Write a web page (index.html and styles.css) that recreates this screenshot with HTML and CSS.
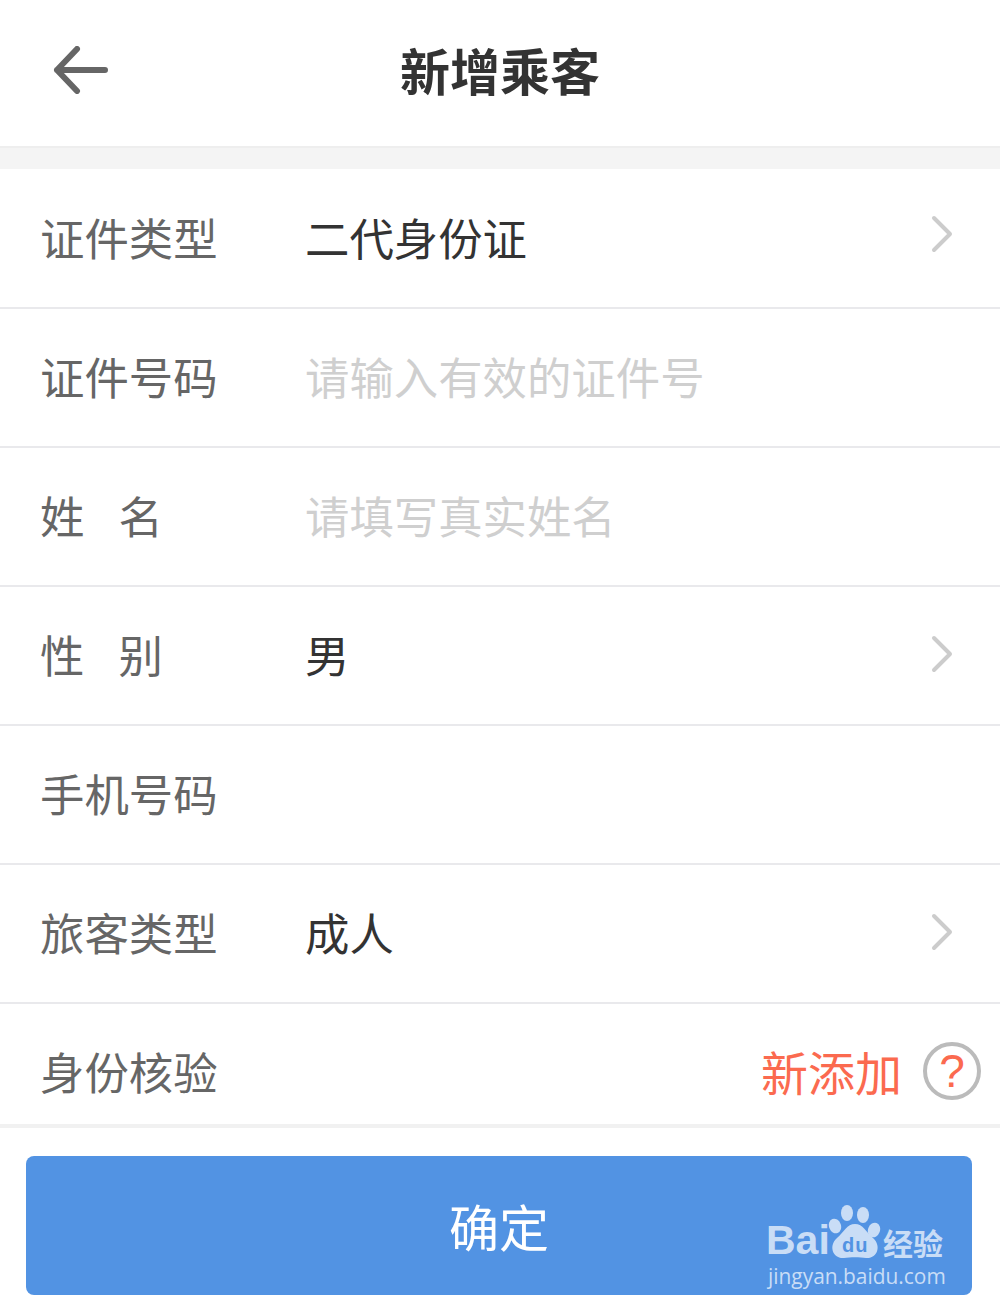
FILE: index.html
```html
<!DOCTYPE html>
<html lang="zh-CN">
<head>
    <meta charset="UTF-8">
    <title>新增乘客</title>
    <link rel="stylesheet" href="styles.css">
</head>
<body>
    <header class="top-bar">
        <svg class="back-icon" width="56" height="48" viewBox="0 0 56 48">
            <path d="M24 3 L4 24 L24 45 M4 24 H52" fill="none" stroke="#666" stroke-width="6" stroke-linecap="round" stroke-linejoin="round"/>
        </svg>
        <h1>新增乘客</h1>
    </header>
    <div class="form">
        <div class="row">
            <span class="label">证件类型</span>
            <span class="value">二代身份证</span>
            <svg class="chevron chevron-up" width="22" height="38" viewBox="0 0 22 38"><path d="M3 3 L19 19 L3 35" fill="none" stroke="#ccc" stroke-width="4" stroke-linecap="round" stroke-linejoin="round"/></svg>
        </div>
        <div class="row">
            <span class="label">证件号码</span>
            <span class="value hint">请输入有效的证件号</span>
        </div>
        <div class="row">
            <span class="label spaced"><span>姓</span><span>名</span></span>
            <span class="value hint">请填写真实姓名</span>
        </div>
        <div class="row">
            <span class="label spaced"><span>性</span><span>别</span></span>
            <span class="value">男</span>
            <svg class="chevron" width="22" height="38" viewBox="0 0 22 38"><path d="M3 3 L19 19 L3 35" fill="none" stroke="#ccc" stroke-width="4" stroke-linecap="round" stroke-linejoin="round"/></svg>
        </div>
        <div class="row">
            <span class="label">手机号码</span>
        </div>
        <div class="row">
            <span class="label">旅客类型</span>
            <span class="value">成人</span>
            <svg class="chevron" width="22" height="38" viewBox="0 0 22 38"><path d="M3 3 L19 19 L3 35" fill="none" stroke="#ccc" stroke-width="4" stroke-linecap="round" stroke-linejoin="round"/></svg>
        </div>
        <div class="row last">
            <span class="label">身份核验</span>
            <span class="add-link">新添加</span>
            <span class="help">?</span>
        </div>
    </div>
    <div class="footer-bar">
        <button class="confirm">确定</button>
        <div class="watermark">
            <div class="wm-top">
                <span class="wm-bai">Bai</span>
                <span class="wm-paw">
                    <svg width="54" height="55" viewBox="0 0 54 55">
                        <ellipse cx="19" cy="8" rx="6" ry="8"/>
                        <ellipse cx="35" cy="10" rx="6" ry="8"/>
                        <ellipse cx="7" cy="21" rx="6" ry="7.5" transform="rotate(-20 7 21)"/>
                        <ellipse cx="46" cy="25" rx="6" ry="7.5" transform="rotate(20 46 25)"/>
                        <path d="M27 19 C35 19 38 27 45 33 C54 41 49 54 38 53 C32 52 22 52 16 53 C5 54 0 41 9 33 C16 27 19 19 27 19 Z"/>
                    </svg>
                    <span class="wm-du">du</span>
                </span>
                <span class="wm-jy">经验</span>
            </div>
            <div class="wm-url">jingyan.baidu.com</div>
        </div>
    </div>
</body>
</html>
```

FILE: styles.css
```css
* {
    box-sizing: border-box;
}
body {
    margin: 0;
    width: 1000px;
    height: 1310px;
    background-color: #fff;
    font-family: "Noto Sans CJK SC", "Liberation Sans", sans-serif;
    overflow: hidden;
}
.top-bar {
    position: relative;
    height: 148px;
    display: flex;
    align-items: center;
    justify-content: center;
    padding-bottom: 8px;
    border-bottom: 2px solid #eeeeee;
}
.back-icon {
    position: absolute;
    left: 53px;
    top: 46px;
}
.top-bar h1 {
    margin: 0;
    font-size: 50px;
    font-weight: 700;
    color: #333;
    line-height: 1;
}
.form::before {
    content: "";
    display: block;
    height: 21px;
    margin-bottom: 1px;
    background-color: #f4f4f4;
}
.row {
    height: 139px;
    display: flex;
    align-items: center;
    padding-left: 40px;
    padding-bottom: 4px;
    border-bottom: 2px solid #e9e9ec;
    font-size: 44.4px;
}
.row.last {
    height: 124px;
    padding-top: 13px;
    padding-bottom: 0;
    padding-right: 19px;
    border-bottom: 4px solid #f1f1f1;
}
.label {
    width: 265px;
    flex-shrink: 0;
    color: #666;
}
.spaced span + span {
    margin-left: 34px;
}
.value {
    color: #333;
    flex: 1;
}
.hint {
    color: #cfcfcf;
}
.chevron {
    margin-right: 47px;
}
.chevron-up {
    margin-top: -8px;
    margin-bottom: -2px;
}
.add-link {
    margin-left: auto;
    font-size: 47px;
    color: #fb6a4f;
}
.help {
    width: 58px;
    height: 58px;
    margin-left: 21px;
    border: 4px solid #bbb;
    border-radius: 50%;
    display: flex;
    align-items: center;
    justify-content: center;
    font-family: "Liberation Sans", sans-serif;
    font-size: 46px;
    color: #fb6a4f;
}
.footer-bar {
    position: relative;
    padding: 28px 28px 0 26px;
}
.confirm {
    display: block;
    width: 946px;
    height: 139px;
    border: none;
    border-radius: 8px;
    background-color: #5293e3;
    color: #fff;
    font-family: inherit;
    font-size: 50px;
    padding: 0 0 2px;
}
.watermark {
    position: absolute;
    left: 768px;
    top: 77px;
    width: 182px;
    color: #c9ddf6;
}
.wm-top {
    display: flex;
    align-items: flex-end;
    height: 55px;
}
.wm-bai {
    font-family: "Liberation Sans", sans-serif;
    font-weight: 700;
    font-size: 41px;
    line-height: 40px;
    width: 62px;
    margin-left: -2px;
    flex-shrink: 0;
}
.wm-paw {
    position: relative;
    width: 54px;
    height: 55px;
    flex-shrink: 0;
}
.wm-paw svg {
    display: block;
    fill: #c9ddf6;
}
.wm-du {
    position: absolute;
    left: 14px;
    top: 30px;
    font-family: "Liberation Sans", sans-serif;
    font-weight: 700;
    font-size: 20px;
    line-height: 20px;
    letter-spacing: 1px;
    color: #5293e3;
}
.wm-jy {
    font-size: 30px;
    font-weight: 700;
    line-height: 36px;
    margin-left: 1px;
    white-space: nowrap;
}
.wm-url {
    font-family: "Open Sans", sans-serif;
    font-size: 20.9px;
    line-height: 26px;
    margin-top: 3px;
    white-space: nowrap;
}
```
